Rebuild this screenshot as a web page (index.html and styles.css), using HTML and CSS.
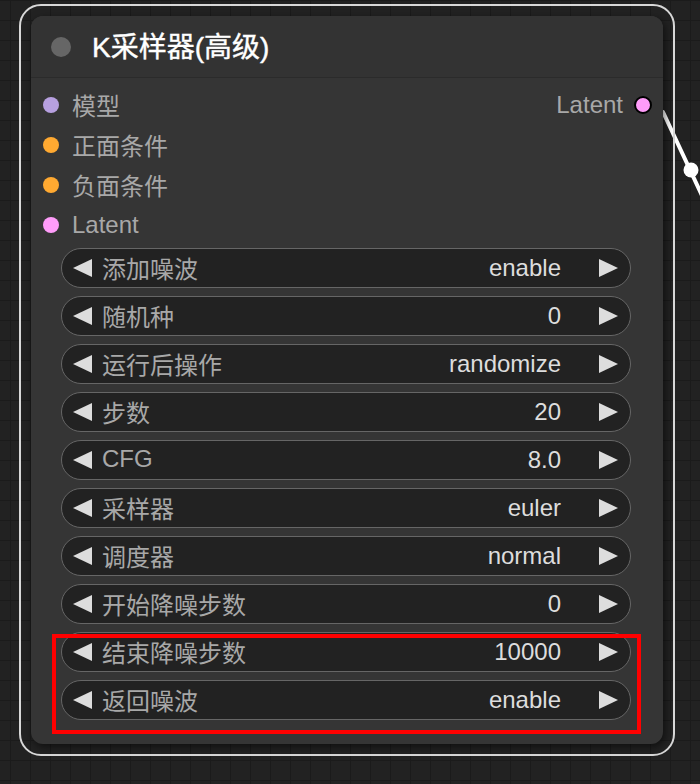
FILE: index.html
```html
<!DOCTYPE html>
<html lang="zh-CN">
<head>
    <meta charset="UTF-8">
    <meta name="viewport" content="width=device-width, initial-scale=1.0">
    <title>K采样器(高级)</title>
    <link rel="stylesheet" href="styles.css">
</head>
<body>

    <div class="canvas">
        <!-- link wire leaving the Latent output -->
        <svg class="link" width="80" height="140" viewBox="0 0 80 140">
            <line x1="10" y1="10" x2="66" y2="130" stroke="#fff" stroke-width="4" stroke-linecap="round"/>
            <circle cx="38" cy="68" r="7.5" fill="#fff"/>
        </svg>

        <div class="selection">
            <div class="node">
                <div class="node-title">
                    <span class="title-dot"></span>
                    <span class="title-text">K采样器(高级)</span>
                </div>

                <div class="node-body">
                    <div class="slots">
                        <div class="inputs">
                            <div class="slot"><span class="dot dot-model"></span><span class="cjk">模型</span></div>
                            <div class="slot"><span class="dot dot-cond"></span><span class="cjk">正面条件</span></div>
                            <div class="slot"><span class="dot dot-cond"></span><span class="cjk">负面条件</span></div>
                            <div class="slot"><span class="dot dot-latent"></span>Latent</div>
                        </div>
                        <div class="outputs">
                            <div class="slot">Latent<span class="dot dot-latent dot-out"></span></div>
                        </div>
                    </div>

                    <div class="widgets" id="widgets"></div>
                </div>

                <div class="highlight"></div>
            </div>
        </div>
    </div>

    <script>
        const widgets = [
            ["添加噪波", "enable"],
            ["随机种", "0"],
            ["运行后操作", "randomize"],
            ["步数", "20"],
            ["CFG", "8.0"],
            ["采样器", "euler"],
            ["调度器", "normal"],
            ["开始降噪步数", "0"],
            ["结束降噪步数", "10000"],
            ["返回噪波", "enable"]
        ];

        const leftArrow = '<svg class="arrow" width="19" height="18" viewBox="0 0 19 18"><polygon points="19,0 19,18 0,9" fill="#ddd"/></svg>';
        const rightArrow = '<svg class="arrow" width="19" height="18" viewBox="0 0 19 18"><polygon points="0,0 0,18 19,9" fill="#ddd"/></svg>';

        let list = document.getElementById("widgets");
        widgets.forEach(function(w) {
            let row = document.createElement("div");
            row.className = "widget";
            row.innerHTML = leftArrow +
                `<span class="widget-label">${w[0]}</span>` +
                `<span class="widget-value">${w[1]}</span>` +
                rightArrow;
            list.appendChild(row);
        });
    </script>

</body>
</html>
```

FILE: styles.css
```css
/* Canvas with grid */
body {
    margin: 0;
    font-family: "Liberation Sans", "Noto Sans CJK SC", sans-serif;
    background-color: #222;
    background-image:
        linear-gradient(to right, #1b1b1b 1px, transparent 1px),
        linear-gradient(to bottom, #1b1b1b 1px, transparent 1px);
    background-size: 20px 20px;
    background-position: 10px 0;
    overflow: hidden;
}

.canvas {
    position: relative;
    width: 700px;
    height: 784px;
    padding: 4px 0 0 19px;
    box-sizing: border-box;
}

.link {
    position: absolute;
    left: 653px;
    top: 102px;
}

/* Selected node outline */
.selection {
    position: relative;
    width: 656px;
    border: 2px solid #d8d8d8;
    border-radius: 22px;
    padding: 10px;
    box-sizing: border-box;
}

/* Node */
.node {
    position: relative;
    width: 632px;
    height: 728px;
    background: #353535;
    border-radius: 12px;
    box-shadow: 2px 3px 8px rgba(0,0,0,0.55);
    display: flex;
    flex-direction: column;
}

.node-title {
    height: 61px;
    background: #333;
    border-bottom: 1px solid #2b2b2b;
    border-radius: 12px 12px 0 0;
    display: flex;
    align-items: center;
    padding-left: 20px;
}

.title-dot {
    width: 20px;
    height: 20px;
    border-radius: 50%;
    background: #666;
    margin-right: 21px;
}

.title-text {
    color: #fff;
    font-size: 28px;
    -webkit-text-stroke: 0.4px #fff;
    margin-bottom: 3px;
}

.node-body {
    padding: 7px 32px 0 30px;
}

/* Input / output slots */
.slots {
    display: flex;
    justify-content: space-between;
    margin-left: -18px;
    margin-right: -21px;
}

.slot {
    height: 40px;
    display: flex;
    align-items: center;
    color: #a8a8a8;
    font-size: 24px;
}

.cjk {
    margin-bottom: 2px;
}

.dot {
    width: 16px;
    height: 16px;
    border-radius: 50%;
    margin-right: 13px;
}

.dot-model { background: #b7a0e0; }
.dot-cond { background: #ffa931; }
.dot-latent { background: #ff9cf9; }

.dot-out {
    width: 14px;
    height: 14px;
    border: 2px solid #000;
    margin: 0 0 0 11px;
}

/* Widgets */
.widgets {
    margin-top: 3px;
    display: flex;
    flex-direction: column;
    gap: 8px;
}

.widget {
    height: 40px;
    box-sizing: border-box;
    border: 1.5px solid #666;
    border-radius: 20px;
    background: #222;
    display: flex;
    align-items: center;
    padding: 0 12px 0 11px;
    font-size: 24px;
}

.widget-label {
    color: #a8a8a8;
    margin-left: 10px;
    margin-bottom: 2px;
}

.widget-value {
    flex: 1;
    text-align: right;
    color: #ddd;
    margin-right: 38px;
}

/* Red annotation box */
.highlight {
    position: absolute;
    left: 21px;
    top: 618px;
    width: 589px;
    height: 100px;
    border: 4px solid #f00;
    box-sizing: border-box;
}
```
